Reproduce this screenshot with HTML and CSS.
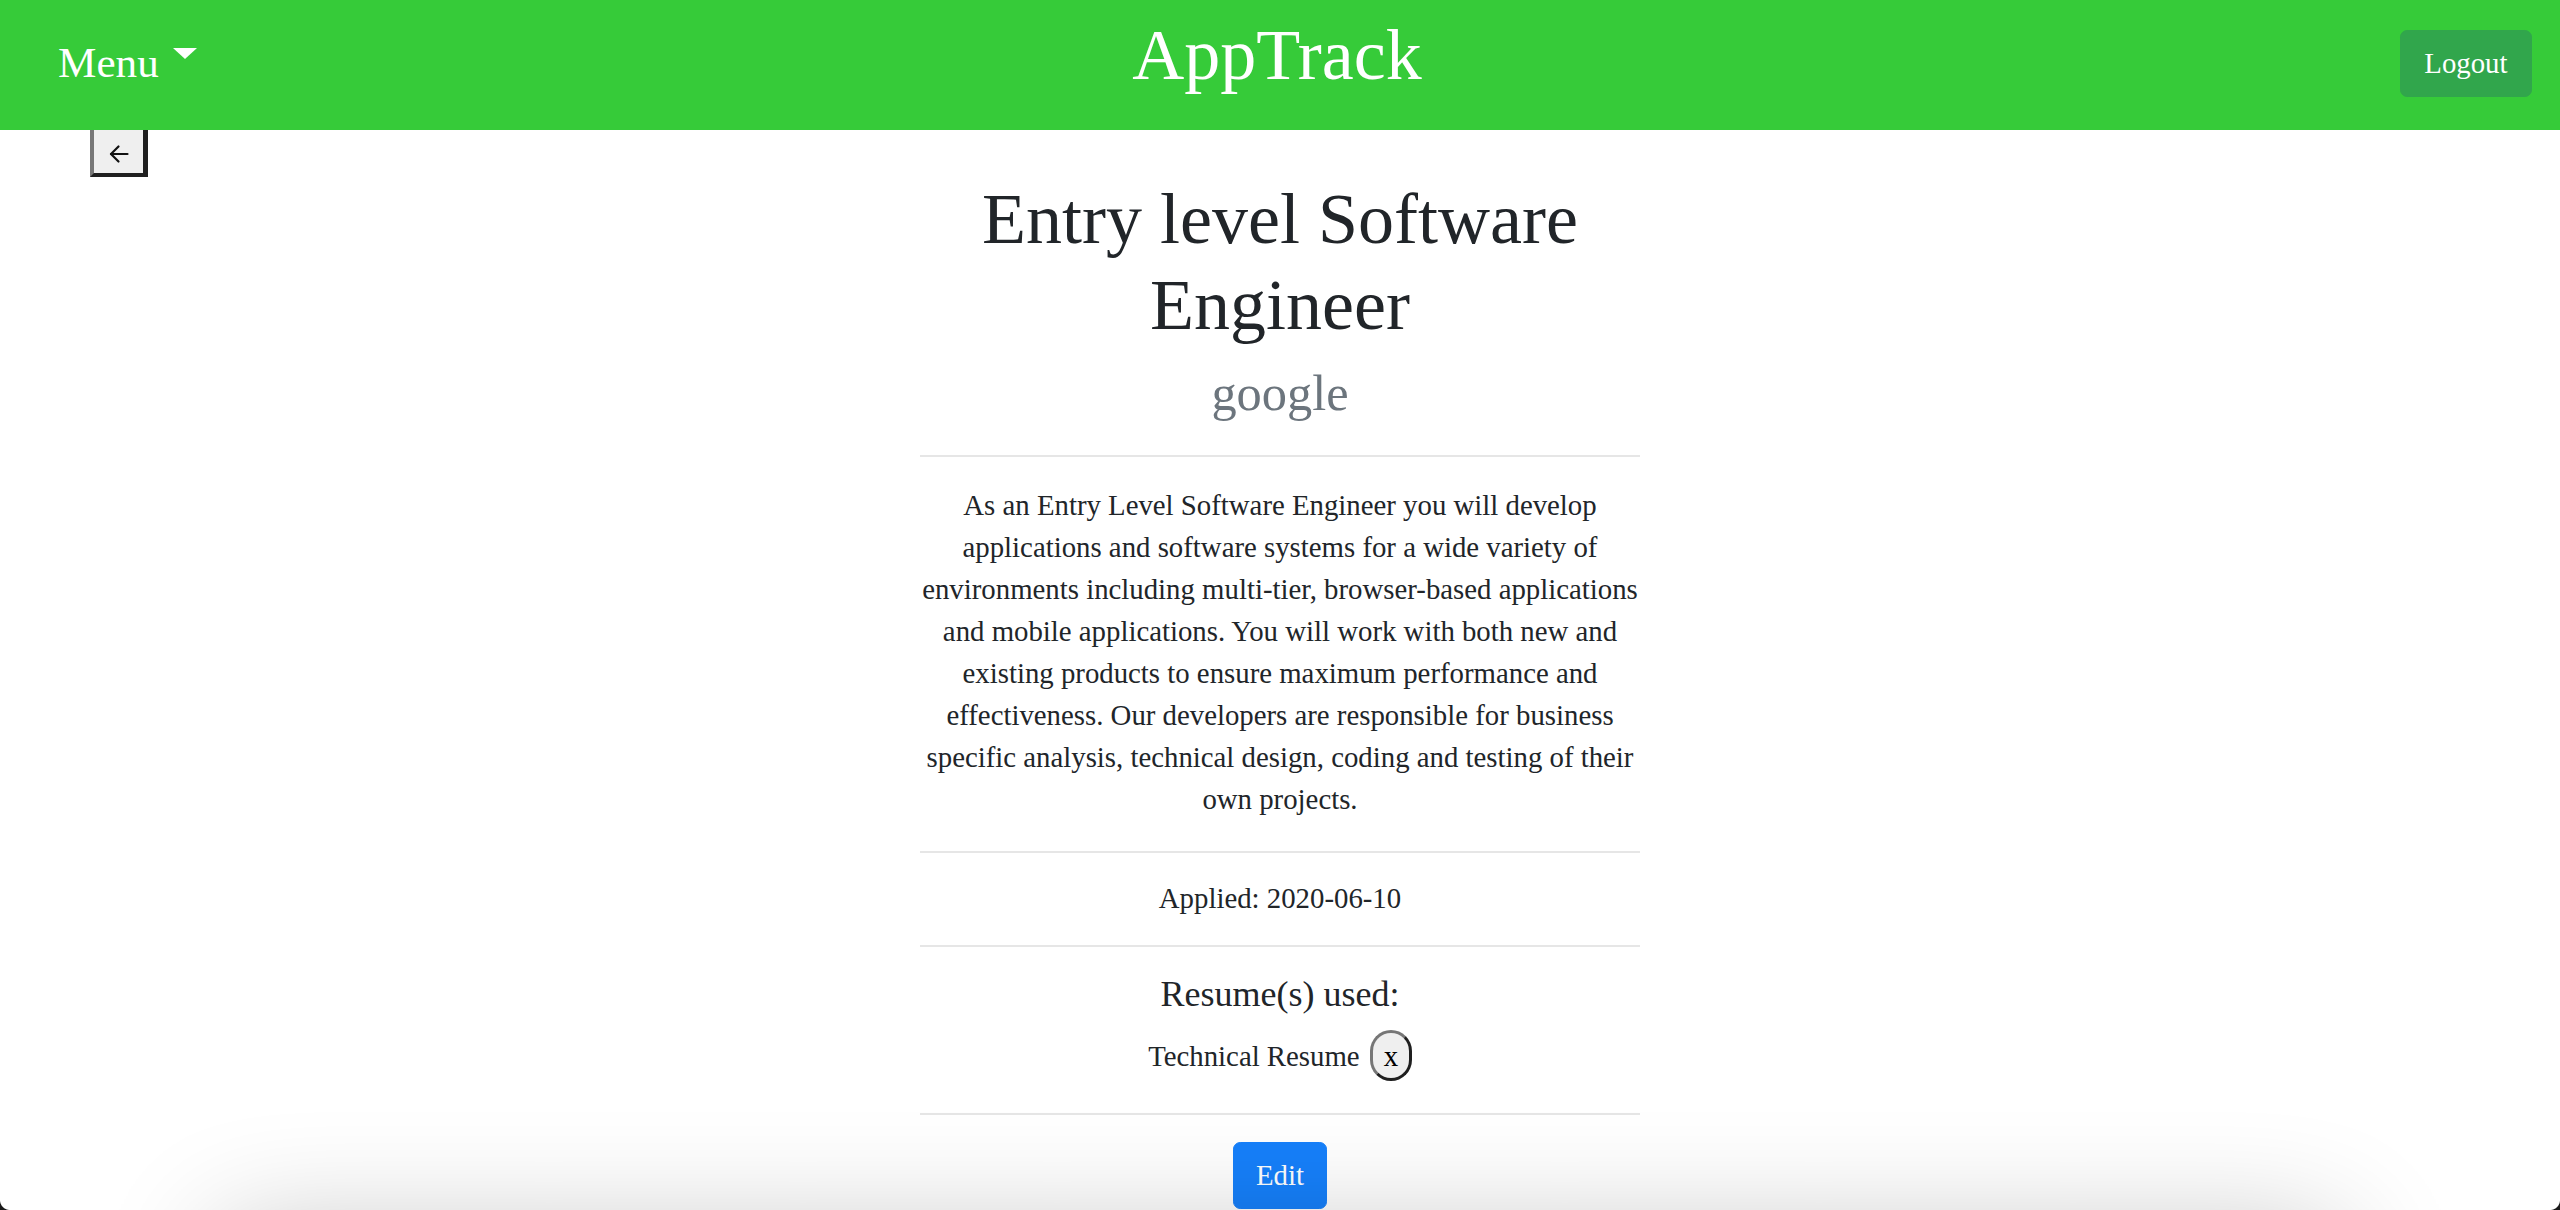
FILE: index.html
```html
<!DOCTYPE html>
<html lang="en">
<head>
<meta charset="utf-8">
<title>AppTrack</title>
<link rel="stylesheet" href="styles.css">
</head>
<body>
<header class="topbar">
  <div class="menu">Menu<span class="caret"></span></div>
  <div class="brand">AppTrack</div>
  <div class="actions"><button class="logout">Logout</button></div>
</header>
<div class="back-row">
  <button class="back" aria-label="Back">
    <svg width="20" height="20" viewBox="0 0 20 20" fill="none" stroke="#111" stroke-width="2.2" stroke-linecap="round" stroke-linejoin="round"><path d="M18.5 10H2"/><path d="M9.5 2.5L2 10l7.5 7.5"/></svg>
  </button>
</div>
<main class="detail">
  <h1 class="title">Entry level Software Engineer</h1>
  <h3 class="company">google</h3>
  <hr class="rule rule-1">
  <p class="desc">As an Entry Level Software Engineer you will develop applications and software systems for a wide variety of environments including multi-tier, browser-based applications and mobile applications. You will work with both new and existing products to ensure maximum performance and effectiveness. Our developers are responsible for business specific analysis, technical design, coding and testing of their own projects.</p>
  <hr class="rule rule-2">
  <p class="applied">Applied: 2020-06-10</p>
  <hr class="rule rule-3">
  <h5 class="resumes-title">Resume(s) used:</h5>
  <div class="resume-row">Technical Resume <button class="remove">x</button></div>
  <hr class="rule rule-4">
  <div class="edit-row"><button class="edit">Edit</button></div>
</main>
<div class="bottom-shadow"></div>
<div class="corner corner-left"></div>
<div class="corner corner-right"></div>
</body>
</html>
```

FILE: styles.css
```css
html, body {
  margin: 0;
  padding: 0;
  background: #ffffff;
}
body {
  font-family: "Liberation Serif", "Times New Roman", serif;
  color: #212529;
  font-size: 28.8px;
  line-height: 42px;
  overflow: hidden;
  height: 1210px;
}
.topbar {
  height: 130px;
  background: #36cb39;
  display: grid;
  grid-template-columns: 1fr auto 1fr;
  align-items: start;
  padding: 0 28px;
  box-sizing: border-box;
  color: #ffffff;
}
.menu {
  margin-top: 31px;
  margin-left: 30px;
  font-size: 43.2px;
  line-height: 64.8px;
  display: flex;
  align-items: center;
}
.caret {
  display: inline-block;
  width: 0;
  height: 0;
  border-left: 12px solid transparent;
  border-right: 12px solid transparent;
  border-top: 11px solid #ffffff;
  margin-left: 14px;
  margin-top: -20px;
}
.brand {
  margin-top: 11.5px;
  margin-right: 6px;
  font-size: 72px;
  line-height: 86.4px;
}
.actions {
  display: flex;
  justify-content: flex-end;
  margin-top: 30px;
}
.logout {
  font-family: "Liberation Serif", "Times New Roman", serif;
  font-size: 28.8px;
  line-height: 43.2px;
  padding: 10.8px 23.5px;
  border: 1.8px solid #31a64c;
  background: #31a64c;
  color: #ffffff;
  border-radius: 7.2px;
}
.back-row {
  height: 46px;
  padding-left: 90px;
}
.back {
  display: flex;
  align-items: center;
  justify-content: center;
  box-sizing: border-box;
  width: 58px;
  height: 47px;
  padding: 4px 0 0;
  background: #efefef;
  border-style: solid;
  border-width: 0 5px 4px 4px;
  border-left-color: #777777;
  border-right-color: #1f1f1f;
  border-bottom-color: #1f1f1f;
}
.detail {
  width: 720px;
  margin: 0 auto;
  text-align: center;
}
.title {
  margin: 0;
  font-size: 72px;
  line-height: 86.4px;
  font-weight: normal;
}
.company {
  margin: 14.4px 0 0;
  font-size: 50.4px;
  line-height: 60.5px;
  font-weight: normal;
  color: #6c757d;
}
.rule {
  border: 0;
  height: 2px;
  background: #e6e6e6;
  margin: 0;
}
.rule-1 { margin-top: 30.8px; margin-bottom: 27.3px; }
.rule-2 { margin-top: 31.7px; margin-bottom: 23.3px; }
.rule-3 { margin-top: 26.2px; margin-bottom: 25.7px; }
.rule-4 { margin-top: 31.6px; margin-bottom: 27.5px; }
.desc, .applied {
  margin: 0;
}
.resumes-title {
  margin: 0 0 14.3px;
  font-size: 36px;
  line-height: 43.2px;
  font-weight: normal;
}
.resume-row {
  line-height: 42px;
}
.remove {
  display: inline-block;
  box-sizing: border-box;
  height: 51px;
  width: 42px;
  padding: 0;
  margin-left: 3px;
  font-family: "Liberation Serif", "Times New Roman", serif;
  font-size: 28.8px;
  line-height: 44px;
  color: #000000;
  background: #efefef;
  border-style: solid;
  border-width: 3.6px;
  border-color: #767676 #1f1f1f #1f1f1f #767676;
  border-radius: 21px;
  vertical-align: baseline;
}
.edit-row {
  display: flex;
  justify-content: center;
}
.edit {
  font-family: "Liberation Serif", "Times New Roman", serif;
  font-size: 28.8px;
  line-height: 43.2px;
  padding: 10.8px 21.6px;
  border: 1.8px solid #1680fb;
  background: #1680fb;
  color: #ffffff;
  border-radius: 7.2px;
}
.bottom-shadow {
  position: fixed;
  left: 220px;
  right: 220px;
  top: 1232px;
  height: 200px;
  box-shadow: 0 0 120px rgba(0, 0, 0, 0.24);
  pointer-events: none;
}
.corner {
  position: fixed;
  bottom: 0;
  width: 10px;
  height: 10px;
  pointer-events: none;
}
.corner-left {
  left: 0;
  background: radial-gradient(circle at 100% 0, transparent 9.5px, #1a1a1a 10.5px);
}
.corner-right {
  right: 0;
  background: radial-gradient(circle at 0 0, transparent 9.5px, #1a1a1a 10.5px);
}
```
